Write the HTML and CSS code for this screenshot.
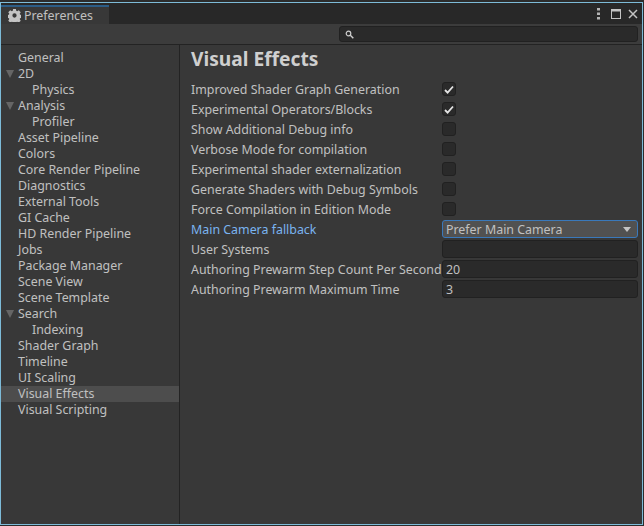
FILE: index.html
```html
<!DOCTYPE html>
<html lang="en">
<head>
    <meta charset="UTF-8">
    <title>Preferences</title>
    <link rel="stylesheet" href="styles.css">
</head>
<body>
    <div class="window">
        <div class="tabbar">
            <div class="tab">
                <svg class="gear" width="13" height="13" viewBox="0 0 14 14"><path fill="#c4c4c4" fill-rule="evenodd" d="M5.500 0h3l.4 2 1 .4 1.700-1.100 2.100 2.100-1.100 1.700.4 1 2 .4v3l-2 .4-.4 1 1.100 1.700-2.100 2.100-1.700-1.100-1 .4-.4 2h-3l-.4-2-1-.4-1.700 1.100-2.100-2.100 1.100-1.700-.4-1-2-.4v-3l2-.4.4-1-1.100-1.700 2.100-2.100 1.700 1.100 1-.4zM7 4.700a2.300 2.300 0 1 0 0 4.600 2.300 2.300 0 0 0 0-4.600z"/></svg>
                <span>Preferences</span>
            </div>
            <div class="tab-icons">
                <svg class="kebab" width="3" height="12" viewBox="0 0 3 12"><rect width="3" height="2.500" fill="#b4b4b4"/><rect y="4.500" width="3" height="2.500" fill="#b4b4b4"/><rect y="9" width="3" height="2.500" fill="#b4b4b4"/></svg>
                <svg class="maximize" width="10" height="10" viewBox="0 0 10 10"><rect width="10" height="10" fill="#c4c4c4"/><rect x="1" y="2.500" width="8" height="6.500" fill="#282828"/></svg>
                <svg width="10" height="10" viewBox="0 0 10 10"><path d="M1 1l8 8M9 1l-8 8" stroke="#c4c4c4" stroke-width="1.500" fill="none"/></svg>
            </div>
        </div>
        <div class="toolbar">
            <div class="search">
                <svg width="9" height="9" viewBox="0 0 9 9"><circle cx="3.500" cy="3.500" r="2.300" stroke="#d0d0d0" stroke-width="1.200" fill="none"/><path d="M5.300 5.300L8.300 8.300" stroke="#d0d0d0" stroke-width="1.400"/></svg>
            </div>
        </div>
        <div class="main">
            <ul class="tree">
                <li>General</li>
                <li class="open">2D</li>
                <li class="sub">Physics</li>
                <li class="open">Analysis</li>
                <li class="sub">Profiler</li>
                <li>Asset Pipeline</li>
                <li>Colors</li>
                <li>Core Render Pipeline</li>
                <li>Diagnostics</li>
                <li>External Tools</li>
                <li>GI Cache</li>
                <li>HD Render Pipeline</li>
                <li>Jobs</li>
                <li>Package Manager</li>
                <li>Scene View</li>
                <li>Scene Template</li>
                <li class="open">Search</li>
                <li class="sub">Indexing</li>
                <li>Shader Graph</li>
                <li>Timeline</li>
                <li>UI Scaling</li>
                <li class="selected">Visual Effects</li>
                <li>Visual Scripting</li>
            </ul>
            <section class="settings">
                <h1>Visual Effects</h1>
                <div class="row"><label>Improved Shader Graph Generation</label><span class="check on"><svg width="10" height="9" viewBox="0 0 10 9"><path d="M1 5l2.600 2.600L9 1.500" stroke="#e4e4e4" stroke-width="1.800" fill="none"/></svg></span></div>
                <div class="row"><label>Experimental Operators/Blocks</label><span class="check on"><svg width="10" height="9" viewBox="0 0 10 9"><path d="M1 5l2.600 2.600L9 1.500" stroke="#e4e4e4" stroke-width="1.800" fill="none"/></svg></span></div>
                <div class="row"><label>Show Additional Debug info</label><span class="check"></span></div>
                <div class="row"><label>Verbose Mode for compilation</label><span class="check"></span></div>
                <div class="row"><label>Experimental shader externalization</label><span class="check"></span></div>
                <div class="row"><label>Generate Shaders with Debug Symbols</label><span class="check"></span></div>
                <div class="row"><label>Force Compilation in Edition Mode</label><span class="check"></span></div>
                <div class="row"><label class="changed">Main Camera fallback</label><div class="select"><span>Prefer Main Camera</span><i class="caret"></i></div></div>
                <div class="row"><label>User Systems</label><div class="field"></div></div>
                <div class="row"><label>Authoring Prewarm Step Count Per Second</label><div class="field">20</div></div>
                <div class="row"><label>Authoring Prewarm Maximum Time</label><div class="field">3</div></div>
            </section>
        </div>
    </div>
</body>
</html>
```

FILE: styles.css
```css
* {
    box-sizing: border-box;
}

html, body {
    margin: 0;
    height: 100%;
    background-color: #2c2c2c;
}

body {
    padding: 2px 1px 1px 0;
    overflow: hidden;
    font-family: "Noto Sans", sans-serif;
    font-size: 12.4px;
    color: #c0c0c0;
}

.window {
    height: 100%;
    display: flex;
    flex-direction: column;
    border: 1px solid #7dbbd8;
    background-color: #383838;
}

.tabbar {
    height: 21px;
    display: flex;
    justify-content: space-between;
    background-color: #282828;
}

.tab {
    width: 108px;
    margin-top: 2px;
    display: flex;
    align-items: center;
    gap: 3px;
    padding: 0 0 0 7px;
    border-top: 2px solid #2c5d87;
    background-color: #383838;
}

.tab-icons {
    display: flex;
    align-items: center;
    padding-right: 4px;
}

.kebab {
    margin-right: 11px;
}

.maximize {
    margin-right: 7px;
}

.toolbar {
    height: 21px;
    display: flex;
    justify-content: flex-end;
    align-items: center;
    padding-right: 4px;
    border-bottom: 1px solid #232323;
    background-color: #3c3c3c;
}

.search {
    width: 299px;
    height: 16px;
    display: flex;
    align-items: center;
    padding-left: 5px;
    border: 1px solid #212121;
    border-radius: 3px;
    background-color: #2a2a2a;
}

.main {
    flex: 1;
    display: flex;
    min-height: 0;
}

.tree {
    width: 178px;
    margin: 0;
    padding: 5px 0 0;
    list-style-type: none;
    flex-shrink: 0;
}

.tree li {
    position: relative;
    height: 16px;
    line-height: 15px;
    padding-left: 17px;
}

.tree li.sub {
    padding-left: 31px;
}

.tree li.open::before {
    content: "";
    position: absolute;
    left: 5px;
    top: 4px;
    border-left: 4px solid transparent;
    border-right: 4px solid transparent;
    border-top: 8px solid #656565;
}

.tree li.selected {
    background-color: #4d4d4d;
}

.settings {
    flex: 1;
    padding: 0 4px 0 11px;
    border-left: 1px solid #232323;
}

.settings h1 {
    margin: 0 0 7px;
    font-size: 19.200px;
    line-height: 27px;
    font-weight: bold;
    color: #cfcfcf;
}

.row {
    height: 20px;
    display: flex;
    align-items: center;
}

.row label {
    width: 251px;
    flex-shrink: 0;
    white-space: nowrap;
}

.row label.changed {
    color: #7ab4f0;
}

.check {
    width: 14px;
    height: 14px;
    display: flex;
    align-items: center;
    justify-content: center;
    border: 1px solid #212121;
    border-radius: 3px;
    background-color: #2a2a2a;
}

.field, .select {
    flex: 1;
    height: 18px;
    display: flex;
    align-items: center;
    padding-left: 3px;
    border: 1px solid #212121;
    border-radius: 3px;
    background-color: #2a2a2a;
}

.select {
    justify-content: space-between;
    padding: 0 6px 0 3px;
    border-color: #3a79bb;
    background-color: #515151;
}

.caret {
    border-left: 4px solid transparent;
    border-right: 4px solid transparent;
    border-top: 5px solid #c4c4c4;
}
```
